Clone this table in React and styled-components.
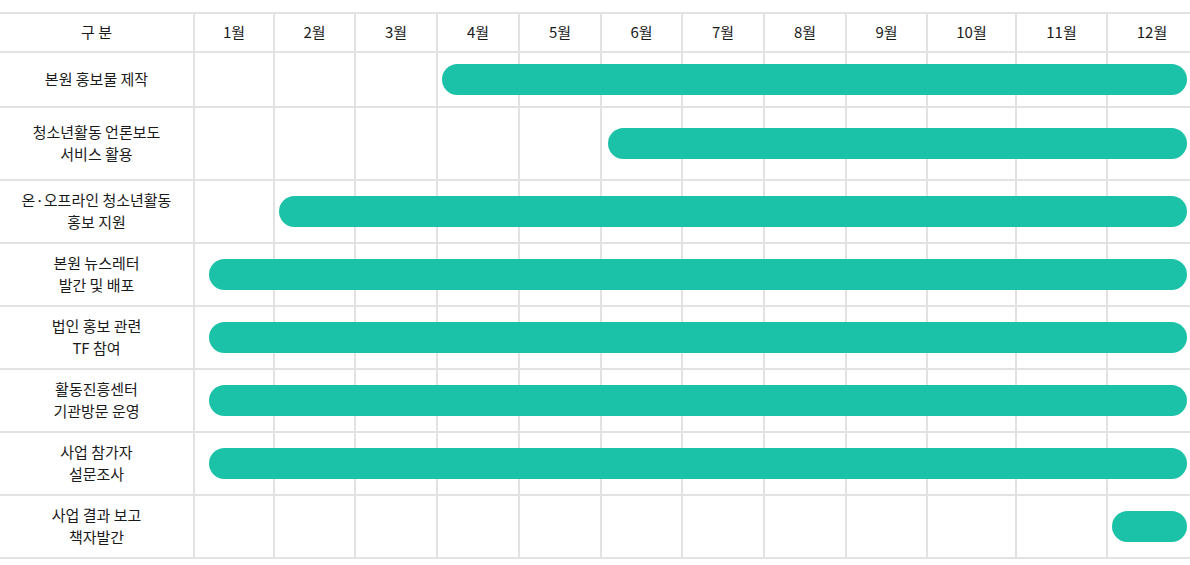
import React from "react";
import styled, { createGlobalStyle } from "styled-components";

const Global = createGlobalStyle`
  html, body { margin: 0; padding: 0; background: #fff; overflow: hidden; }
  body { font-family: "Noto Sans CJK KR", "Noto Sans", sans-serif; color: #1a1a1a; }
`;

const COLS = "195px 80px 81px 82px 82px 82px 81px 82px 82px 81px 89px 91px 90px";
const LINE = "#e2e2e2";

const Table = styled.div`
  margin-top: 12px;
  width: 1198px;
  border-top: 2px solid ${LINE};
`;

const Row = styled.div`
  display: grid;
  grid-template-columns: ${COLS};
  grid-template-rows: ${(p) => p.$h}px;
`;

const Cell = styled.div`
  grid-row: 1;
  grid-column: ${(p) => p.$col};
  box-sizing: border-box;
  border-right: 2px solid ${LINE};
  border-bottom: 2px solid ${LINE};
  display: flex;
  align-items: center;
  justify-content: center;
  text-align: center;
  font-size: 15px;
  line-height: 22px;
  padding-bottom: 1px;
  color: #1a1a1a;
  white-space: pre-line;
`;

const Bar = styled.div`
  grid-row: 1;
  grid-column: ${(p) => p.$start + 1} / -1;
  align-self: center;
  height: 31px;
  margin-top: -2px;
  border-radius: 16px;
  background: #1bc2a7;
  margin-left: ${(p) => p.$offset}px;
  margin-right: 11px;
  z-index: 1;
`;

const months = ["1월", "2월", "3월", "4월", "5월", "6월", "7월", "8월", "9월", "10월", "11월", "12월"];

const rows = [
  { label: "본원 홍보물 제작", h: 55, start: 4, offset: 4 },
  { label: "청소년활동 언론보도\n서비스 활용", h: 73, start: 6, offset: 6 },
  { label: "온·오프라인 청소년활동\n홍보 지원", h: 63, start: 2, offset: 4 },
  { label: "본원 뉴스레터\n발간 및 배포", h: 63, start: 1, offset: 14 },
  { label: "법인 홍보 관련\nTF 참여", h: 63, start: 1, offset: 14 },
  { label: "활동진흥센터\n기관방문 운영", h: 63, start: 1, offset: 14 },
  { label: "사업 참가자\n설문조사", h: 63, start: 1, offset: 14 },
  { label: "사업 결과 보고\n책자발간", h: 63, start: 12, offset: 4 },
];

export default function App() {
  return (
    <>
      <Global />
      <Table>
        <Row $h={39}>
          <Cell $col={1}>구 분</Cell>
          {months.map((m, i) => (
            <Cell key={m} $col={i + 2}>{m}</Cell>
          ))}
        </Row>
        {rows.map((r) => (
          <Row key={r.label} $h={r.h}>
            <Cell $col={1}>{r.label}</Cell>
            {months.map((m, i) => (
              <Cell key={m} $col={i + 2} />
            ))}
            <Bar $start={r.start} $offset={r.offset} />
          </Row>
        ))}
      </Table>
    </>
  );
}
